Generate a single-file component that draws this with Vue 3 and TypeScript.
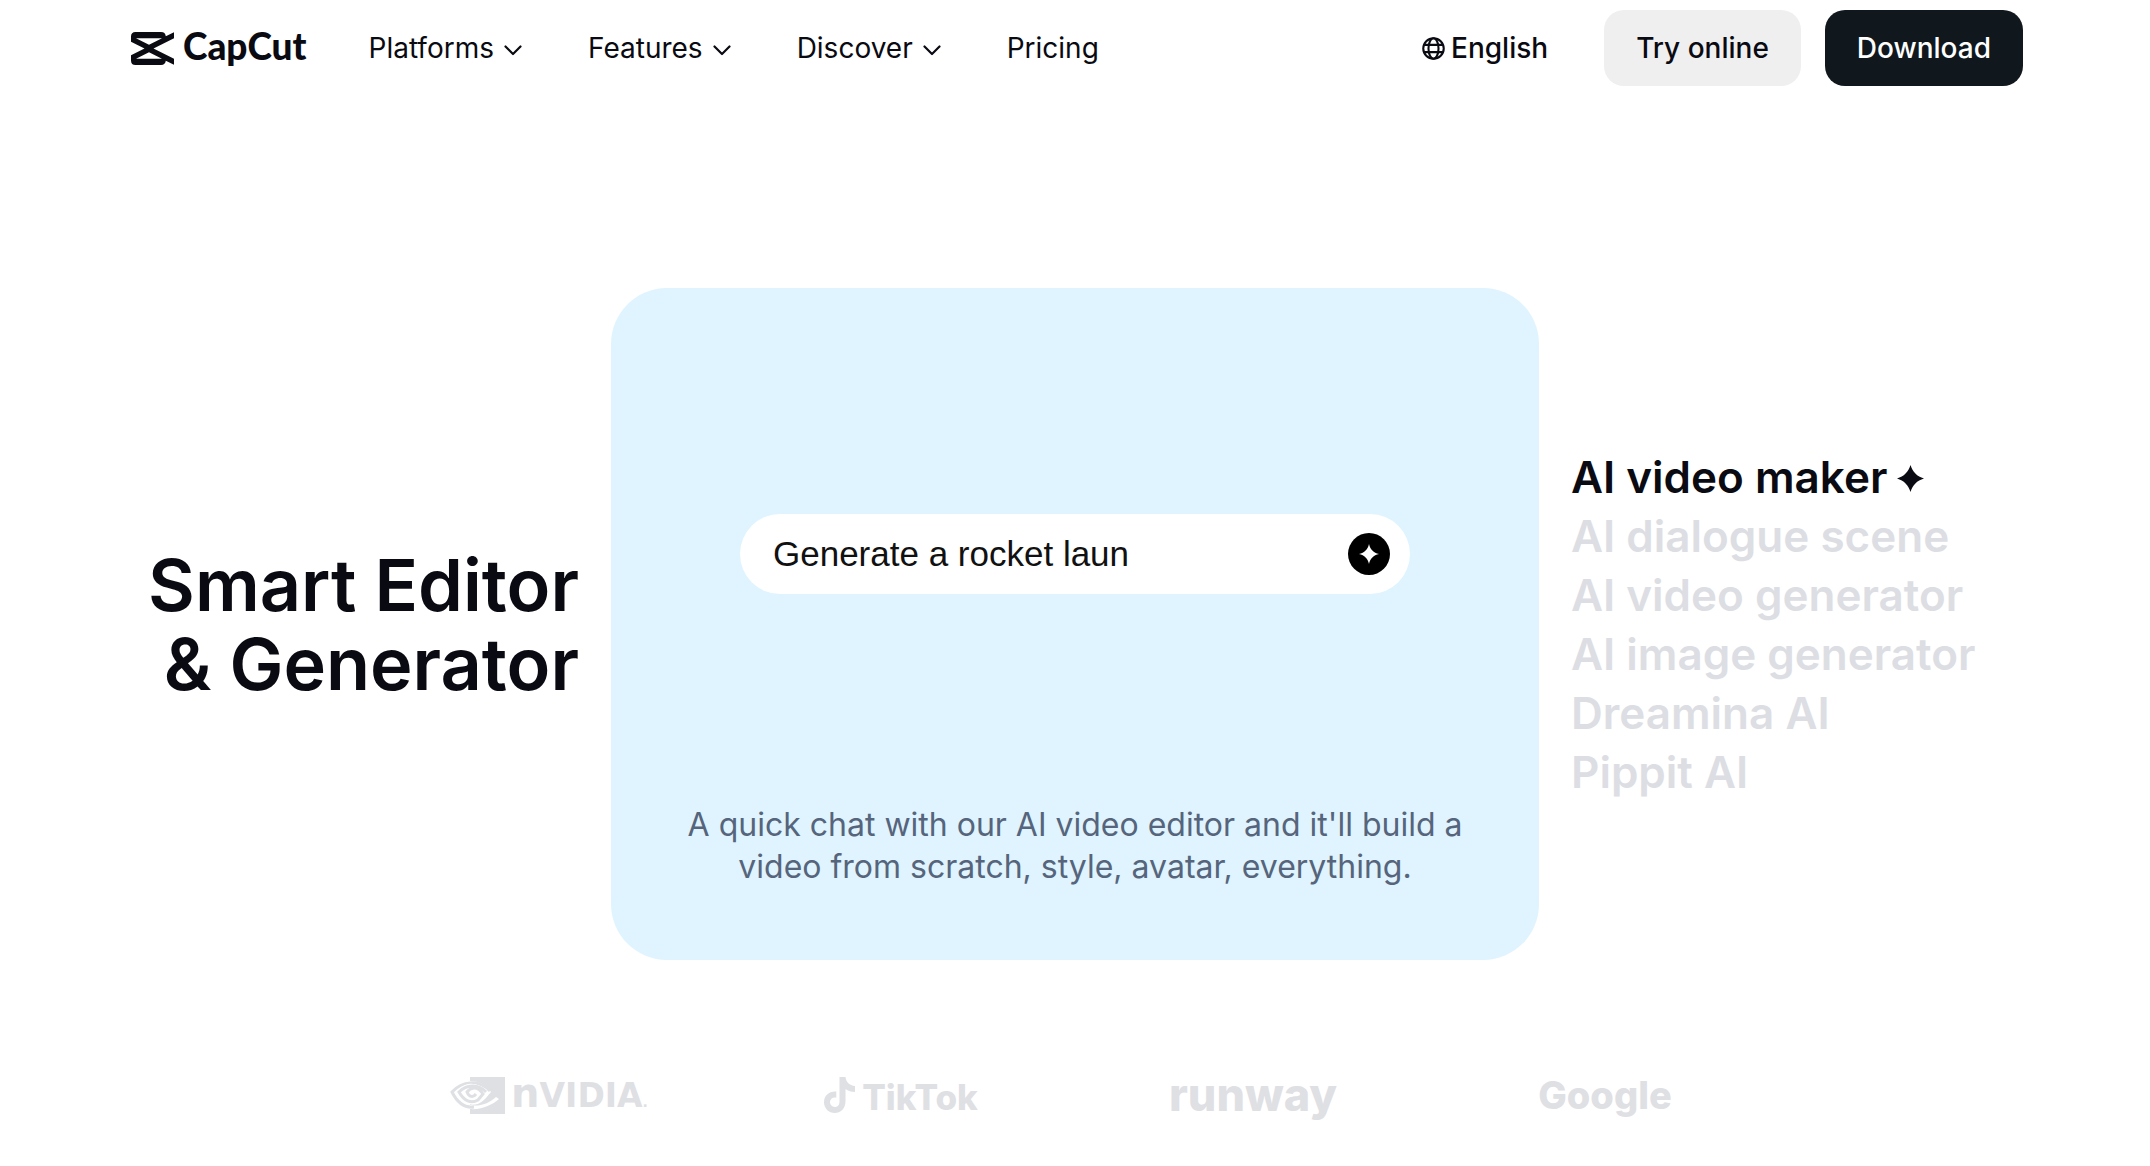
<script setup lang="ts">
import { ref } from 'vue'

interface NavItem {
  label: string
  menu: boolean
}

const navItems: NavItem[] = [
  { label: 'Platforms', menu: true },
  { label: 'Features', menu: true },
  { label: 'Discover', menu: true },
  { label: 'Pricing', menu: false },
]

const tools: string[] = [
  'AI video maker',
  'AI dialogue scene',
  'AI video generator',
  'AI image generator',
  'Dreamina AI',
  'Pippit AI',
]

const activeTool = ref<number>(0)
const prompt = ref<string>('Generate a rocket laun')
</script>

<template>
  <div class="page">
    <header class="header">
      <a class="brand" href="#">
        <svg class="brand-mark" viewBox="0 0 43 33" aria-hidden="true">
          <path
            fill="currentColor"
            fill-rule="evenodd"
            d="M4.500 0H30C33 0 34.500 1.500 34.800 4.200L43 0.300V6.200L22.500 16.500L43 26.800V32.700L34.800 28.800C34.500 31.500 33 33 30 33H4.500C1.500 33 0 31.500 0 28.500V23.300L13.500 16.500L0 9.700V4.500C0 1.500 1.500 0 4.500 0ZM5 6.200L18 12.800L31 6.200ZM5 26.800H31L18 20.200Z"
          />
        </svg>
        <span class="brand-name">CapCut</span>
      </a>

      <nav class="nav" aria-label="Main">
        <template v-for="item in navItems" :key="item.label">
          <button v-if="item.menu" class="nav-item" type="button">
            {{ item.label }}
            <svg class="chevron" viewBox="0 0 18 11" aria-hidden="true">
              <path d="M1.500 1.500L9 9L16.500 1.500" fill="none" stroke="currentColor" stroke-width="2.200" stroke-linecap="round" stroke-linejoin="round" />
            </svg>
          </button>
          <a v-else class="nav-item" href="#">{{ item.label }}</a>
        </template>
      </nav>

      <div class="actions">
        <button class="language" type="button">
          <svg class="globe" viewBox="0 0 22 22" fill="none" stroke="currentColor" stroke-width="2" aria-hidden="true">
            <circle cx="11" cy="11" r="9.800" />
            <ellipse cx="11" cy="11" rx="4.800" ry="9.800" />
            <path d="M2 7.500H20M2 14.500H20" />
          </svg>
          English
        </button>
        <a class="cta cta-light" href="#">Try online</a>
        <a class="cta cta-dark" href="#">Download</a>
      </div>
    </header>

    <main>
      <section class="hero">
        <h1 class="title">Smart Editor<br />&amp; Generator</h1>

        <div class="card">
          <form class="prompt" @submit.prevent>
            <input v-model="prompt" class="prompt-input" type="text" aria-label="Prompt" />
            <button class="prompt-send" type="submit" aria-label="Generate">
              <svg viewBox="0 0 20 20" aria-hidden="true">
                <path fill="currentColor" d="M10 0C11.200 5.500 14.500 8.800 20 10C14.500 11.200 11.200 14.500 10 20C8.800 14.500 5.500 11.200 0 10C5.500 8.800 8.800 5.500 10 0Z" />
              </svg>
            </button>
          </form>
          <p class="caption">A quick chat with our AI video editor and it'll build a video from scratch, style, avatar, everything.</p>
        </div>

        <ul class="tools">
          <li v-for="(tool, index) in tools" :key="tool">
            <a href="#" class="tool" :class="{ active: index === activeTool }" @mouseenter="activeTool = index">
              {{ tool }}
              <svg v-if="index === activeTool" class="tool-star" viewBox="0 0 20 20" aria-hidden="true">
                <path fill="currentColor" d="M10 0C11.600 5.200 14.800 8.400 20 10C14.800 11.600 11.600 14.800 10 20C8.400 14.800 5.200 11.600 0 10C5.200 8.400 8.400 5.200 10 0Z" />
              </svg>
            </a>
          </li>
        </ul>
      </section>

      <section class="partners" aria-label="Partners">
        <div class="partner nvidia">
          <svg class="nvidia-eye" viewBox="0 0 55 37" aria-hidden="true">
            <path fill="currentColor" d="M20 0H55V37H20V32C32 33 42 28 49 22L46 20C38 27 29 30 20 28V25C30 27 36 21 41 15C36 8 29 4 20 4Z" />
            <g fill="none" stroke="currentColor" stroke-width="3">
              <path d="M40 14C29 2 12 4 2 15C8 27 16 31 24 30" />
              <path d="M32 15C25 7 16 9 10 15C14 23 20 26 27 24C31 22 34 19 36 16" stroke="#fff" stroke-width="6" />
              <path d="M36 15C28 6 16 8 9 15C14 24 21 27 28 23L33 17C27 8 20 11 17 15C19 20 23 21 26 17" />
            </g>
          </svg>
          <span class="nvidia-name"><span class="nvidia-n">n</span>VIDIA<span class="nvidia-dot">.</span></span>
        </div>
        <div class="partner tiktok">
          <svg class="tiktok-note" viewBox="0 0 31 36" aria-hidden="true">
            <path fill="currentColor" d="M15.500 0H21.500C22 5 25.500 8.500 31 9V15C27 15 24 13.800 21.500 12V24.500C21.500 31.500 16.500 36 10.800 36C4.800 36 0 31.500 0 25.300C0 18.300 5.500 14 12.300 14.600V20.800C8.800 20 6 22 6 25.100C6 28 8.200 30 10.800 30C13.800 30 15.500 27.800 15.500 24.500Z" />
          </svg>
          <span class="tiktok-name">TikTok</span>
        </div>
        <div class="partner runway">runway</div>
        <div class="partner google">Google</div>
      </section>
    </main>
  </div>
</template>

<style>
body {
  margin: 0;
  background: #fff;
}
</style>

<style scoped>
.page {
  padding-bottom: 40px;
  color: #0a0a12;
  font-family: Inter, sans-serif;
}

a {
  color: inherit;
  text-decoration: none;
}

button {
  padding: 0;
  border: 0;
  background: none;
  color: inherit;
  font: inherit;
  cursor: pointer;
}

.header {
  display: flex;
  align-items: center;
  height: 96px;
  padding: 0 127px 0 131px;
}

.brand {
  display: flex;
  align-items: center;
  gap: 9px;
}

.brand-mark {
  width: 43px;
  height: 33px;
}

.brand-name {
  padding-bottom: 4px;
  font-family: Lato, sans-serif;
  font-size: 37px;
  font-weight: 900;
  line-height: 40px;
}

.nav {
  display: flex;
  gap: 66px;
  margin-left: 62px;
}

.nav-item {
  display: flex;
  align-items: center;
  gap: 10px;
  font-size: 28px;
  line-height: 40px;
}

.chevron {
  width: 18px;
  height: 11px;
  margin-top: 5px;
}

.actions {
  display: flex;
  align-items: center;
  gap: 24px;
  margin-left: auto;
  font-size: 28px;
  font-weight: 500;
  line-height: 40px;
}

.language {
  display: flex;
  align-items: center;
  gap: 6px;
  margin-right: 32px;
}

.globe {
  width: 23px;
  height: 23px;
}

.cta {
  padding: 18px 32px;
  border-radius: 20px;
}

.cta-light {
  background: #efeff0;
}

.cta-dark {
  background: #10181e;
  color: #fff;
}

.hero {
  display: grid;
  grid-template-columns: 1fr minmax(0, 928px) 1fr;
  align-items: center;
  gap: 32px;
  margin-top: 192px;
}

.title {
  margin: 0;
  font-size: 72px;
  font-weight: 600;
  line-height: 79px;
  text-align: right;
}

.card {
  display: flex;
  flex-direction: column;
  align-items: center;
  box-sizing: border-box;
  padding: 226px 64px 72px;
  border-radius: 56px;
  background: #dff4ff;
}

.prompt {
  display: flex;
  align-items: center;
  box-sizing: border-box;
  width: 100%;
  max-width: 670px;
  height: 80px;
  padding: 0 20px 0 33px;
  border-radius: 40px;
  background: #fff;
}

.prompt-input {
  flex: 1;
  min-width: 0;
  padding: 0;
  border: 0;
  outline: 0;
  background: none;
  color: #111;
  font-family: "Liberation Sans", Arial, sans-serif;
  font-size: 35px;
}

.prompt-send {
  display: flex;
  align-items: center;
  justify-content: center;
  width: 42px;
  height: 42px;
  border-radius: 50%;
  background: #000;
  color: #fff;
}

.prompt-send svg {
  width: 20px;
  height: 20px;
}

.caption {
  margin: 210px 0 0;
  color: #56657b;
  font-size: 32px;
  line-height: 42px;
  text-align: center;
}

.tools {
  margin: 0;
  padding: 2px 0 0;
  list-style: none;
  font-size: 44px;
  font-weight: 600;
  line-height: 59px;
}

.tool {
  display: flex;
  align-items: center;
  gap: 10px;
  color: #dcdee3;
  white-space: nowrap;
}

.tool.active {
  color: #0a0a12;
}

.tool-star {
  width: 27px;
  height: 27px;
  margin-top: 2px;
}

.partners {
  display: grid;
  grid-template-columns: repeat(4, 1fr);
  align-items: center;
  max-width: 1408px;
  margin: 111px auto 0;
  padding-left: 4px;
  color: #dfe0e4;
}

.partner {
  display: flex;
  align-items: center;
  justify-content: center;
  height: 48px;
  font-weight: 800;
  line-height: 48px;
}

.nvidia {
  gap: 6px;
}

.nvidia-eye {
  width: 55px;
  height: 37px;
}

.nvidia-name {
  padding-top: 4px;
  font-family: "DejaVu Sans", sans-serif;
  font-size: 33px;
  font-weight: 700;
}

.nvidia-n {
  font-size: 40px;
}

.nvidia-dot {
  font-size: 14px;
}

.tiktok {
  gap: 7px;
  font-size: 35px;
}

.tiktok-name {
  padding-top: 4px;
}

.tiktok-note {
  width: 31px;
  height: 36px;
}

.runway {
  font-size: 45px;
}

.google {
  font-size: 38px;
}
</style>
